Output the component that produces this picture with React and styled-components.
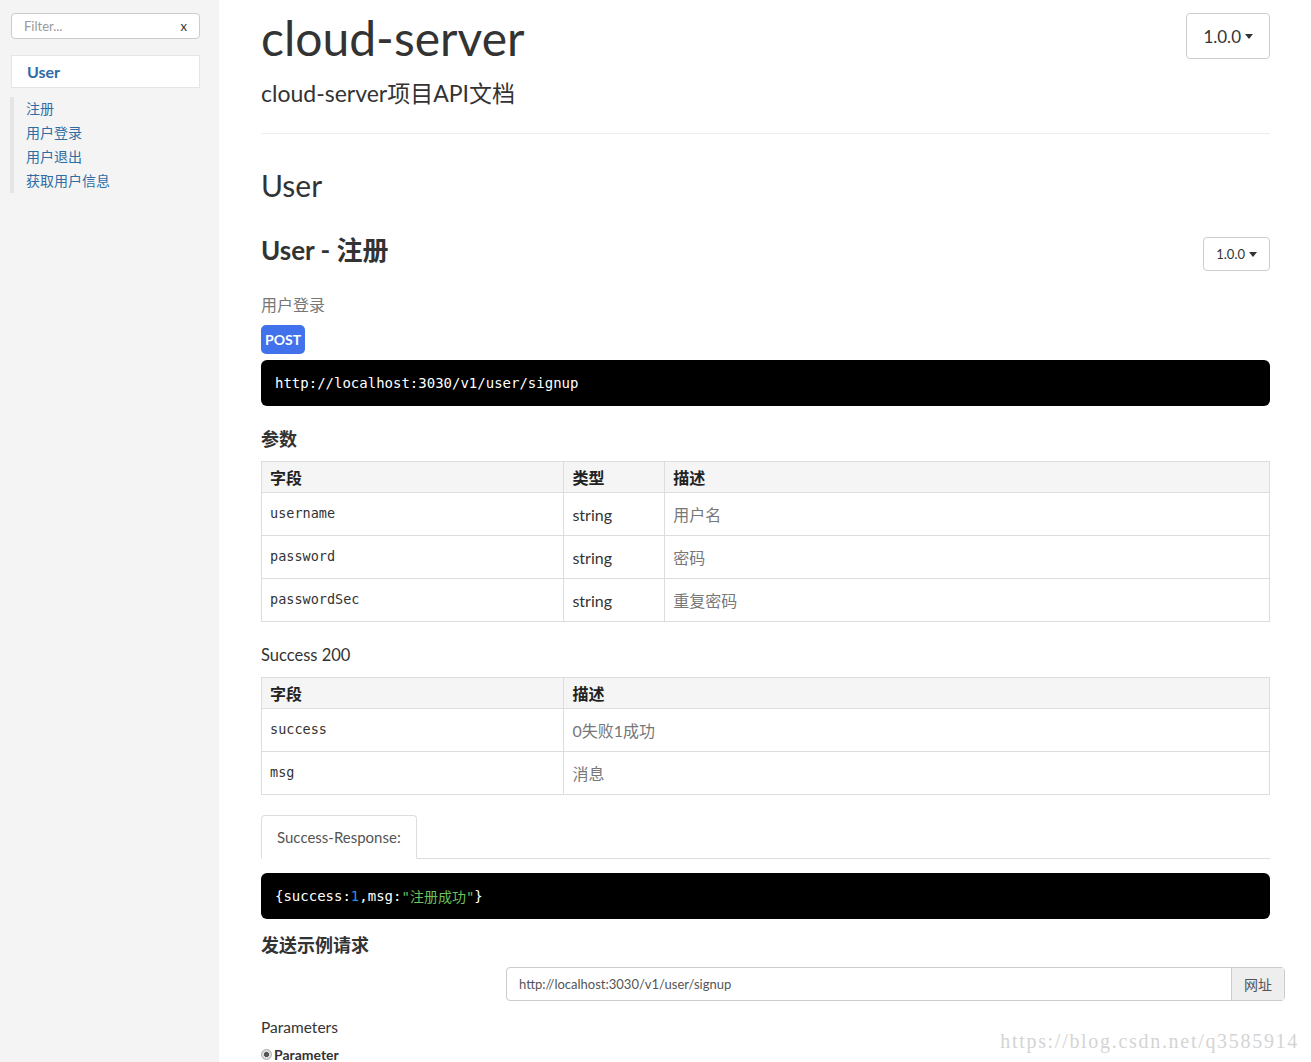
import styled, { createGlobalStyle } from "styled-components";

const Global = createGlobalStyle`
    html, body {
        margin: 0;
        padding: 0;
        background: #fff;
        font-family: Lato, "Noto Sans CJK SC", sans-serif;
        color: #333;
    }
`

const Page = styled.div`
    display: flex;
    height: 1062px;
    position: relative;
    overflow: hidden;
`

const Sidebar = styled.aside`
    width: 219px;
    flex-shrink: 0;
    background: #f4f4f4;
    padding: 13px 19px 0 11px;
    box-sizing: border-box;
`

const Filter = styled.div`
    height: 24px;
    border: 1px solid #ccc;
    border-radius: 4px;
    background: #fff;
    display: flex;
    align-items: center;
    justify-content: space-between;
    padding: 0 12px;
    font-size: 13px;
    color: #999;
    span:last-child {
        color: #333;
        font-size: 13px;
    }
`

const NavHeader = styled.div`
    margin-top: 16px;
    height: 31px;
    border: 1px solid #e5e5e5;
    background: #fff;
    display: flex;
    align-items: center;
    padding-left: 15px;
    font-size: 16px;
    font-weight: 700;
    color: #2e6da4;
`

const NavList = styled.ul`
    list-style: none;
    margin: 9px 0 0 -1px;
    padding: 0 0 0 12px;
    border-left: 4px solid #e5e5e5;
`

const NavItem = styled.li`
    font-size: 14px;
    line-height: 24px;
    color: #2e6da4;
`

const Main = styled.main`
    flex: 1;
    padding: 0 41px 0 42px;
    min-width: 0;
`

const HeaderRow = styled.div`
    display: flex;
    justify-content: space-between;
    align-items: flex-start;
    border-bottom: 1px solid #eee;
    padding-bottom: 25px;
`

const Title = styled.h1`
    margin: 8px 0 0;
    font-size: 48px;
    font-weight: 400;
    line-height: 60px;
    color: #333;
`

const Subtitle = styled.div`
    margin-top: 10px;
    font-size: 23px;
    line-height: 30px;
    color: #333;
`

const VersionButton = styled.div`
    margin-top: ${p => p.$big ? "13px" : "2px"};
    height: ${p => p.$big ? "44px" : "32px"};
    padding: 0 ${p => p.$big ? "16px" : "12px"};
    border: 1px solid #ccc;
    border-radius: 4px;
    display: flex;
    align-items: center;
    gap: 4px;
    font-size: ${p => p.$big ? "17px" : "13px"};
    color: #333;
    &::after {
        content: "";
        border-top: 5px solid #333;
        border-left: 4px solid transparent;
        border-right: 4px solid transparent;
    }
`

const GroupTitle = styled.h2`
    margin: 31px 0 0;
    font-size: 30px;
    font-weight: 400;
    line-height: 40px;
`

const ArticleHead = styled.div`
    display: flex;
    justify-content: space-between;
    align-items: flex-start;
    margin-top: 30px;
`

const ArticleTitle = styled.h3`
    margin: 0;
    font-size: 26px;
    font-weight: 700;
    line-height: 30px;
`

const Desc = styled.p`
    margin: 22px 0 0;
    font-size: 16px;
    color: #777;
    line-height: 24px;
`

const Badge = styled.div`
    width: fit-content;
    margin-top: 8px;
    height: 29px;
    display: flex;
    align-items: center;
    background: #4172ec;
    color: #fff;
    font-weight: 700;
    font-size: 14px;
    padding: 0 4px;
    border-radius: 5px;
`

const Code = styled.pre`
    margin: ${p => p.$tight ? "14px" : "6px"} 0 0;
    background: #000;
    color: #fff;
    border-radius: 6px;
    padding: 0 14px;
    height: 46px;
    display: flex;
    align-items: center;
    font-family: "DejaVu Sans Mono", "Noto Sans CJK SC", monospace;
    font-size: 14px;
    .num { color: #2a8fe0; }
    .str { color: #6bc25c; }
`

const SectionTitle = styled.h4`
    margin: ${p => p.$top || "20px"} 0 0;
    font-size: ${p => p.$size || "18px"};
    font-weight: ${p => p.$light ? 400 : 700};
    line-height: 26px;
`

const Table = styled.table`
    width: 100%;
    margin-top: 9px;
    border-collapse: collapse;
    font-size: 16px;
    th, td {
        border: 1px solid #ddd;
        padding: 0 8px;
        text-align: left;
    }
    th {
        background: #f5f5f5;
        height: 30px;
        font-weight: 700;
        color: #222;
    }
    td {
        height: 39px;
        color: #333;
    }
`

const Mono = styled.td`
    font-family: "DejaVu Sans Mono", monospace;
    font-size: 13.5px !important;
    color: #333 !important;
    padding-bottom: 3px !important;
`

const Muted = styled.td`
    color: #777 !important;
`

const Tabs = styled.div`
    margin-top: 20px;
    border-bottom: 1px solid #ddd;
    display: flex;
`

const Tab = styled.div`
    margin-bottom: -1px;
    height: 42px;
    padding: 0 15px;
    border: 1px solid #ddd;
    border-bottom-color: #fff;
    border-radius: 4px 4px 0 0;
    background: #fff;
    display: flex;
    align-items: center;
    font-size: 15px;
    color: #555;
`

const InputGroup = styled.div`
    display: flex;
    margin: 9px -15px 0 245px;
    height: 34px;
    border: 1px solid #ccc;
    border-radius: 4px;
    box-sizing: border-box;
    font-size: 13px;
    color: #555;
`

const UrlField = styled.div`
    flex: 1;
    display: flex;
    align-items: center;
    padding: 0 12px;
`

const Addon = styled.div`
    width: 52px;
    display: flex;
    align-items: center;
    justify-content: center;
    background: #eee;
    border-left: 1px solid #ccc;
    font-size: 14px;
`

const Radio = styled.label`
    display: flex;
    align-items: center;
    margin-top: 6px;
    font-size: 14px;
    font-weight: 700;
    color: #333;
    &::before {
        content: "";
        width: 9px;
        height: 9px;
        border-radius: 50%;
        background: radial-gradient(#555 35%, #ddd 45%);
        border: 1px solid #aaa;
        margin-right: 2px;
    }
`

const Watermark = styled.div`
    position: absolute;
    right: 12px;
    top: 1030px;
    font-family: "Liberation Serif", serif;
    font-size: 20px;
    letter-spacing: 1.7px;
    color: #d4d4d4;
`

const App = () => {
    return (
        <Page>
            <Global />
            <Sidebar>
                <Filter><span>Filter...</span><span>x</span></Filter>
                <NavHeader>User</NavHeader>
                <NavList>
                    <NavItem>注册</NavItem>
                    <NavItem>用户登录</NavItem>
                    <NavItem>用户退出</NavItem>
                    <NavItem>获取用户信息</NavItem>
                </NavList>
            </Sidebar>
            <Main>
                <HeaderRow>
                    <div>
                        <Title>cloud-server</Title>
                        <Subtitle>cloud-server项目API文档</Subtitle>
                    </div>
                    <VersionButton $big>1.0.0</VersionButton>
                </HeaderRow>
                <GroupTitle>User</GroupTitle>
                <ArticleHead>
                    <ArticleTitle>User - 注册</ArticleTitle>
                    <VersionButton>1.0.0</VersionButton>
                </ArticleHead>
                <Desc>用户登录</Desc>
                <Badge>POST</Badge>
                <Code>http://localhost:3030/v1/user/signup</Code>

                <SectionTitle>参数</SectionTitle>
                <Table>
                    <thead>
                        <tr><th style={{ width: "30%" }}>字段</th><th style={{ width: "10%" }}>类型</th><th>描述</th></tr>
                    </thead>
                    <tbody>
                        <tr><Mono>username</Mono><td>string</td><Muted>用户名</Muted></tr>
                        <tr><Mono>password</Mono><td>string</td><Muted>密码</Muted></tr>
                        <tr><Mono>passwordSec</Mono><td>string</td><Muted>重复密码</Muted></tr>
                    </tbody>
                </Table>

                <SectionTitle $light $top="20px" $size="16.5px">Success 200</SectionTitle>
                <Table>
                    <thead>
                        <tr><th style={{ width: "30%" }}>字段</th><th>描述</th></tr>
                    </thead>
                    <tbody>
                        <tr><Mono>success</Mono><Muted>0失败1成功</Muted></tr>
                        <tr><Mono>msg</Mono><Muted>消息</Muted></tr>
                    </tbody>
                </Table>

                <Tabs><Tab>Success-Response:</Tab></Tabs>
                <Code $tight>{"{success:"}<span className="num">1</span>{",msg:"}<span className="str">"注册成功"</span>{"}"}</Code>

                <SectionTitle $top="13px">发送示例请求</SectionTitle>
                <InputGroup>
                    <UrlField>http://localhost:3030/v1/user/signup</UrlField>
                    <Addon>网址</Addon>
                </InputGroup>
                <SectionTitle $light $top="13px" $size="15.5px">Parameters</SectionTitle>
                <Radio>Parameter</Radio>
            </Main>
            <Watermark>https://blog.csdn.net/q3585914</Watermark>
        </Page>
    );
};

export default App;
